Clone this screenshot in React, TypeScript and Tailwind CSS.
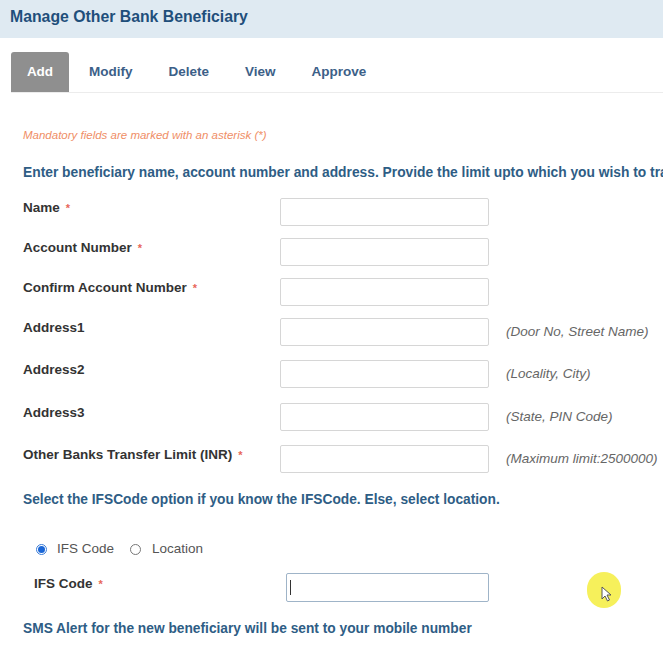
import React from 'react'

const rows = [
    { label: 'Name', required: true, hint: '', gap: 'mt-0' },
    { label: 'Account Number', required: true, hint: '', gap: 'mt-3' },
    { label: 'Confirm Account Number', required: true, hint: '', gap: 'mt-3' },
    { label: 'Address1', required: false, hint: '(Door No, Street Name)', gap: 'mt-3' },
    { label: 'Address2', required: false, hint: '(Locality, City)', gap: 'mt-[14px]' },
    { label: 'Address3', required: false, hint: '(State, PIN Code)', gap: 'mt-[15px]' },
    { label: 'Other Banks Transfer Limit (INR)', required: true, hint: '(Maximum limit:2500000)', gap: 'mt-[14px]' },
]

const tabs = ['Add', 'Modify', 'Delete', 'View', 'Approve']

const Star = () => <span className="ml-[6px] text-[11px] align-top text-[#e8675a]">*</span>

const App = () => {
    return (
        <div className="w-[663px] h-[646px] overflow-hidden bg-white font-['Liberation_Sans',Arial,sans-serif] relative">
            <div className="h-[38px] bg-[#dfeaf2] flex items-center px-[10px] pb-[4px]">
                <h3 className="text-[15.8px] font-bold text-[#1f4f7b] whitespace-nowrap">
                    Manage Other Bank Beneficiary
                </h3>
            </div>

            <div className="mt-[14px] ml-[11px] flex items-end border-b border-[#ececec] h-[41px]">
                {tabs.map((t, i) => (
                    <div
                        key={t}
                        className={
                            i === 0
                                ? 'h-[40px] w-[58px] flex items-center justify-center rounded-t-[3px] bg-[#8f8f8f] text-white text-[13.5px] font-bold'
                                : 'h-[40px] flex items-center text-[13.5px] font-bold text-[#3c6088] ' +
                                  (i === 1 ? 'ml-[20px]' : 'ml-[36px]')
                        }
                    >
                        {t}
                    </div>
                ))}
            </div>

            <p className="mt-[35px] ml-[23px] text-[11.5px] italic text-[#ef8e66] leading-[14px]">
                Mandatory fields are marked with an asterisk (*)
            </p>

            <div className="mt-[23px] ml-[23px] overflow-hidden">
                <p className="text-[13.8px] font-bold text-[#2e5d85] whitespace-nowrap leading-[16px]">
                    Enter beneficiary name, account number and address. Provide the limit upto which you wish to tra
                </p>
            </div>

            <div className="mt-[17px] ml-[23px]">
                {rows.map((r) => (
                    <div key={r.label} className={`flex items-start ${r.gap}`}>
                        <div className="w-[257px] pt-[2px] text-[13.5px] font-bold text-[#333] leading-[16px] whitespace-nowrap">
                            {r.label}
                            {r.required && <Star />}
                        </div>
                        <input
                            type="text"
                            className="w-[209px] h-[28px] border border-[#d6d6d6] rounded-[2px] outline-none"
                        />
                        {r.hint && (
                            <span className="ml-[17px] mt-[6px] text-[13.5px] italic text-[#666] whitespace-nowrap leading-[16px]">
                                {r.hint}
                            </span>
                        )}
                    </div>
                ))}
            </div>

            <p className="mt-[19px] ml-[23px] text-[13.75px] font-bold text-[#2e5d85] whitespace-nowrap leading-[16px]">
                Select the IFSCode option if you know the IFSCode. Else, select location.
            </p>

            <div className="mt-[33px] ml-[36px] flex items-center text-[13.5px] text-[#555] leading-[16px]">
                <span className="w-[11px] h-[11px] rounded-full border border-[#3b7dd8] bg-white flex items-center justify-center">
                    <span className="w-[7px] h-[7px] rounded-full bg-[#1a66d6]" />
                </span>
                <span className="ml-[10px]">IFS Code</span>
                <span className="ml-[16px] w-[11px] h-[11px] rounded-full border border-[#777] bg-white" />
                <span className="ml-[11px]">Location</span>
            </div>

            <div className="mt-[16px] ml-[34px] flex items-start">
                <div className="w-[252px] pt-[3px] text-[13.5px] font-bold text-[#333] leading-[16px]">
                    IFS Code
                    <Star />
                </div>
                <div className="w-[203px] h-[29px] border border-[#9fb4c8] rounded-[2px] flex items-center pl-[3px]">
                    <span className="w-px h-[15px] bg-[#333]" />
                </div>
            </div>

            <p className="mt-[19px] ml-[23px] text-[13.75px] font-bold text-[#2e5d85] whitespace-nowrap leading-[16px]">
                SMS Alert for the new beneficiary will be sent to your mobile number
            </p>

            <div className="absolute left-[587px] top-[572px] w-[34px] h-[36px] rounded-full bg-[#f6ef4a] opacity-90">
                <svg className="absolute left-[14px] top-[14px]" width="12" height="16" viewBox="0 0 12 16">
                    <path d="M1 1 L1 13 L4 10 L6.5 15 L8.5 14 L6 9 L10 9 Z" fill="#fff" stroke="#444" strokeWidth="1" />
                </svg>
            </div>
        </div>
    )
}

export default App
